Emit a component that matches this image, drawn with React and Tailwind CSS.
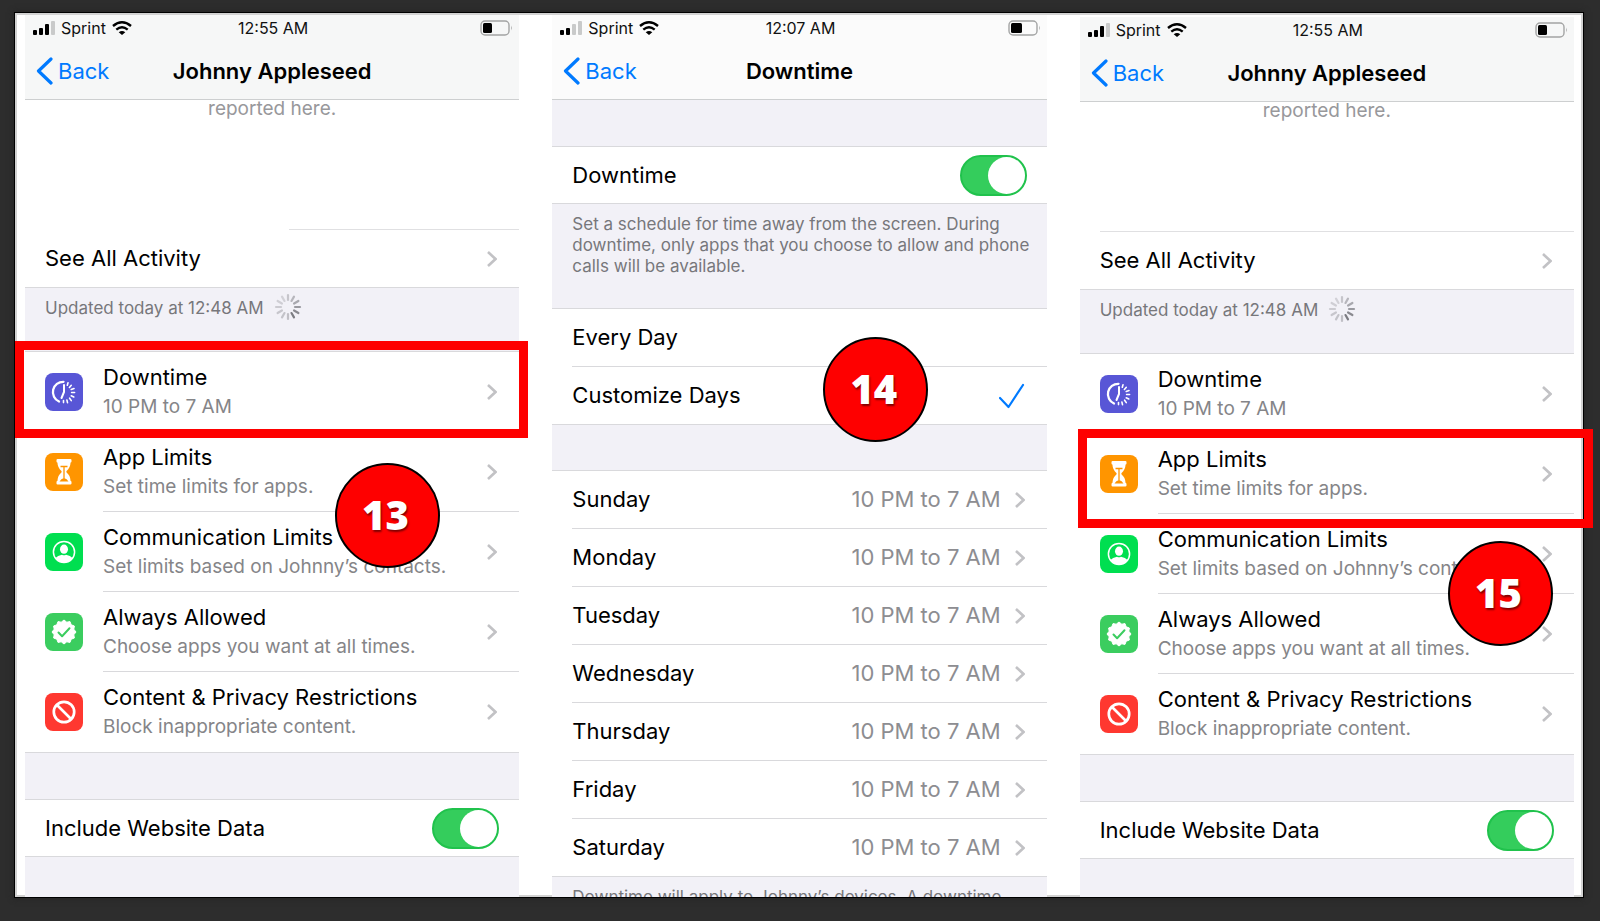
import React, { useState } from "react";
import clsx from "clsx";

const DAYS = [
  "Sunday",
  "Monday",
  "Tuesday",
  "Wednesday",
  "Thursday",
  "Friday",
  "Saturday",
];

function DowntimeIcon() {
  return (
    <svg viewBox="0 0 38 38" className="size-[38px] shrink-0 rounded-lg bg-[#5856d6]" fill="none" stroke="white" strokeLinecap="round">
      <path d="M18.5 8.800 A10.300 10.300 0 0 0 14 28.500" strokeWidth="2.300" />
      <path d="M19 12 V19 L16.500 25" strokeWidth="2" />
      <path d="M23 9.800 l-.7 2.400 M26.300 12.300 l-1.900 2.200 M29 15.500 l-2.800 1 M29.600 19.500 h-3 M28.800 24 l-2.600 -1.200 M26.300 27.600 l-1.700 -2.400 M22.500 29.600 l-.6 -2.600 M18.500 29.600 v-2" strokeWidth="1.600" />
    </svg>
  );
}

function HourglassIcon() {
  return (
    <svg viewBox="0 0 38 38" className="size-[38px] shrink-0 rounded-lg bg-[#ff9500]">
      <path
        d="M11.5 7 q0 -1 1.2 -1 h12.600 q1.200 0 1.200 1 v1.600 q0 .9 -.9 1 q-.3 5.400 -4 8.400 q-.6 .8 0 1.600 q3.700 3 4 8.400 q.9 .1 .9 1 v1.600 q0 1 -1.200 1 h-12.600 q-1.200 0 -1.200 -1 v-1.600 q0 -.9 .9 -1 q.3 -5.400 4 -8.400 q.6 -.8 0 -1.600 q-3.700 -3 -4 -8.400 q-.9 -.1 -.9 -1 z"
        fill="white"
      />
      <path d="M15.500 13.500 h7 M19 13.500 v12" stroke="#ff9500" strokeWidth="1.300" fill="none" />
      <path d="M14.500 28.500 q1.500 -2.800 4.500 -3.500 q3 .7 4.500 3.500 z" fill="#ff9500" />
    </svg>
  );
}

function ContactIcon() {
  return (
    <svg viewBox="0 0 38 38" className="size-[38px] shrink-0 rounded-lg bg-[#00df50]">
      <circle cx="19" cy="19" r="10.600" fill="none" stroke="white" strokeWidth="1.500" />
      <ellipse cx="19" cy="16.200" rx="4" ry="4.600" fill="white" />
      <path d="M10.500 25 q2 -2.500 6.500 -3.200 q2 1 4 0 q4.500 .7 6.500 3.200 q-3.200 4.500 -8.500 4.500 t-8.500 -4.500 z" fill="white" />
    </svg>
  );
}

function AllowedIcon() {
  return (
    <svg viewBox="0 0 38 38" className="size-[38px] shrink-0 rounded-lg bg-[#3bcd5f]">
      <path
        d="M19 7 L21.800 9.200 L25 8.600 L26.200 11.800 L29.400 13 L28.800 16.200 L31 19 L28.800 21.800 L29.400 25 L26.200 26.200 L25 29.400 L21.800 28.800 L19 31 L16.200 28.800 L13 29.400 L11.800 26.200 L8.600 25 L9.200 21.800 L7 19 L9.200 16.200 L8.600 13 L11.800 11.800 L13 8.600 L16.200 9.200 Z"
        fill="white"
        stroke="white"
        strokeWidth="1"
        strokeLinejoin="round"
      />
      <path d="M13.500 19.500 l3.600 3.700 l7.400 -8" fill="none" stroke="#3bcd5f" strokeWidth="2" strokeLinecap="round" strokeLinejoin="round" />
    </svg>
  );
}

function RestrictedIcon() {
  return (
    <svg viewBox="0 0 38 38" className="size-[38px] shrink-0 rounded-lg bg-[#ff3830]" fill="none" stroke="white" strokeWidth="2.700">
      <circle cx="19" cy="19" r="10.200" />
      <path d="M12 12 L26 26" />
    </svg>
  );
}

function Chevron() {
  return (
    <svg viewBox="0 0 10 16" className="h-4 w-[10px] shrink-0" fill="none" stroke="#c2c2c5" strokeWidth="2.600">
      <path d="M1 1 L8.500 8 L1 15" />
    </svg>
  );
}

function Spinner() {
  const spokes = Array.from({ length: 12 }, (_, i) => i);
  return (
    <svg viewBox="0 0 28 28" className="size-7" stroke="#76767c" strokeWidth="2.200" strokeLinecap="round">
      {spokes.map((i) => (
        <line key={i} x1="14" y1="2" x2="14" y2="7" transform={`rotate(${i * 30} 14 14)`} opacity={i < 6 ? 0.35 + i * 0.12 : 0.4 - (i - 6) * 0.03} />
      ))}
    </svg>
  );
}

function StatusBar({ time, bars, level }) {
  return (
    <div className="grid h-7 grid-cols-3 items-center pb-[2px] pl-2 pr-[6px] text-base text-[#111]">
      <div className="flex items-center gap-[6px]">
        <svg viewBox="0 0 22 14" className="h-[14px] w-[22px]">
          {[5, 7, 11, 14].map((h, i) => (
            <rect key={h} x={i * 6} y={14 - h} width="4" height={h} rx="1" fill={i < bars ? "#000" : "#c9caca"} />
          ))}
        </svg>
        <span>Sprint</span>
        <svg viewBox="0 0 20 14" className="h-[14px] w-5" fill="none" stroke="black" strokeWidth="2.400">
          <path d="M1 5 Q10 -2.500 19 5" />
          <path d="M4.300 8.600 Q10 4 15.700 8.600" />
          <path d="M10 14 L6.700 11.200 Q10 8.700 13.300 11.200 Z" fill="black" stroke="none" />
        </svg>
      </div>
      <span className="text-center">{time}</span>
      <svg viewBox="0 0 33 16" className="h-4 w-[33px] justify-self-end">
        <rect x="1" y="1" width="28" height="14" rx="4" fill="none" stroke="#a3a4a4" strokeWidth="1.400" />
        <rect x="3" y="3" width={level} height="10" rx="1.500" fill="black" />
        <path d="M31 5.500 q1.600 2.500 0 5 z" fill="#a3a4a4" />
      </svg>
    </div>
  );
}

function NavBar({ title, time, bars, level, tinted }) {
  return (
    <header className={clsx("border-b border-[#cdcfd0]", tinted ? "bg-[#f6f7f7]" : "bg-[#fbfbfb]")}>
      <StatusBar time={time} bars={bars} level={level} />
      <div className="grid h-14 grid-cols-[1fr_auto_1fr] items-center">
        <a href="#back" className="flex items-center gap-[5px] pl-[11px] text-[22px] text-[#007aff]">
          <svg viewBox="0 0 17 28" className="h-7 w-[17px]" fill="none" stroke="#007aff" strokeWidth="3.200" strokeLinecap="round" strokeLinejoin="round">
            <path d="M15 2 L2.500 14 L15 26" />
          </svg>
          Back
        </a>
        <h1 className="text-[22px] font-semibold text-black">{title}</h1>
      </div>
    </header>
  );
}

function ToggleRow({ id, label }) {
  const [on, setOn] = useState(true);
  return (
    <div className="flex h-[57px] items-center justify-between border-b border-[#d9d9dc] px-5">
      <label htmlFor={id} className="text-[22px] text-black">
        {label}
      </label>
      <input
        id={id}
        type="checkbox"
        role="switch"
        checked={on}
        onChange={(e) => setOn(e.target.checked)}
        className="h-[41px] w-[67px] appearance-none rounded-full border-2 border-[#c9c9cc] bg-[#d9d9dc] before:block before:size-[37px] before:rounded-full before:bg-white checked:border-[#20c24c] checked:bg-[#34cd5c] checked:before:ml-[26px]"
      />
    </div>
  );
}

function StepBadge({ number, className }) {
  return (
    <div
      className={clsx(
        "absolute z-20 flex size-[105px] items-center justify-center rounded-full border-2 border-black bg-[#fe0000] pb-[2px] pr-1 font-['Open_Sans',sans-serif] text-[40px] font-extrabold text-white [text-shadow:1px_2px_2px_rgba(0,0,0,0.5)]",
        className
      )}
    >
      {number}
    </div>
  );
}

const SETTINGS = [
  { id: "downtime", icon: DowntimeIcon, title: "Downtime", detail: "10 PM to 7 AM" },
  { id: "limits", icon: HourglassIcon, title: "App Limits", detail: "Set time limits for apps." },
  { id: "communication", icon: ContactIcon, title: "Communication Limits", detail: "Set limits based on Johnny’s contacts." },
  { id: "allowed", icon: AllowedIcon, title: "Always Allowed", detail: "Choose apps you want at all times." },
  { id: "privacy", icon: RestrictedIcon, title: "Content & Privacy Restrictions", detail: "Block inappropriate content." },
];

function SettingRow({ item, last, highlight }) {
  const Icon = item.icon;
  return (
    <li className="relative">
      <a href={`#${item.id}`} className="flex h-20 items-center gap-5 pl-5">
        <Icon />
        <span className={clsx("flex h-full min-w-0 flex-1 items-center justify-between pr-[22px]", !last && "border-b border-[#d9d9dc]")}>
          <span className="flex flex-col whitespace-nowrap leading-[30px]">
            <span className="text-[22px] text-black">{item.title}</span>
            <span className="text-[19px] text-[#858588]">{item.detail}</span>
          </span>
          <Chevron />
        </span>
      </a>
      {highlight && (
        <div className={clsx("pointer-events-none absolute z-10 border-[9px] border-[#fe0000]", highlight)} />
      )}
    </li>
  );
}

function ScreenTime({ id, highlighted, highlight, dividerClass, className }) {
  return (
    <section className={clsx("relative flex flex-col", className)}>
      <NavBar title="Johnny Appleseed" time="12:55 AM" bars={3} level={9} tinted />
      <div className="flex h-[129px] justify-center overflow-hidden">
        <p className="text-[19px] leading-[18px] text-[#98989b]">reported here.</p>
      </div>
      <div className={clsx("border-t border-[#e0e0e2]", dividerClass)} />
      <a href="#activity" className="flex h-[58px] items-center justify-between border-b border-[#d9d9dc] pl-5 pr-[22px] text-[22px] text-black">
        See All Activity
        <Chevron />
      </a>
      <div className="flex h-16 items-start gap-[10px] border-b border-[#d9d9dc] bg-[#f2f1f7] pl-5 pt-[5px] text-[17px] leading-[31px] text-[#77777b]">
        <span>Updated today at 12:48 AM</span>
        <Spinner />
      </div>
      <ul>
        {SETTINGS.map((item, i) => (
          <SettingRow
            key={item.id}
            item={item}
            last={i === SETTINGS.length - 1}
            highlight={item.id === highlighted ? highlight : null}
          />
        ))}
      </ul>
      <div className="h-12 border-y border-[#d9d9dc] bg-[#f2f1f7]" />
      <ToggleRow id={id} label="Include Website Data" />
      <div className="flex-1 bg-[#f2f1f7]" />
    </section>
  );
}

function Downtime() {
  const [schedule, setSchedule] = useState("Customize Days");
  return (
    <section className="relative flex flex-col">
      <NavBar title="Downtime" time="12:07 AM" bars={2} level={11} />
      <div className="h-[47px] border-b border-[#d9d9dc] bg-[#f2f1f7]" />
      <ToggleRow id="downtime-on" label="Downtime" />
      <div className="h-[105px] border-b border-[#d9d9dc] bg-[#f2f1f7] pl-5 pr-3 pt-[10px]">
        <p className="text-[17px] leading-[21px] text-[#77777b]">
          Set a schedule for time away from the screen. During downtime, only
          apps that you choose to allow and phone calls will be available.
        </p>
      </div>
      <div className="border-b border-[#d9d9dc] pl-5">
        {["Every Day", "Customize Days"].map((option, i) => (
          <label key={option} className={clsx("flex items-center justify-between pr-[22px] text-[22px] text-black", i === 0 ? "h-[58px] border-b border-[#d9d9dc]" : "h-[57px]")}>
            {option}
            <input type="radio" name="schedule" checked={schedule === option} onChange={() => setSchedule(option)} className="size-0 appearance-none" />
            {schedule === option && (
              <svg viewBox="0 0 26 26" className="ml-auto size-[26px]" fill="none" stroke="#007aff" strokeWidth="2.200" strokeLinecap="round" strokeLinejoin="round">
                <path d="M1 15 L9.500 24 L24 2" />
              </svg>
            )}
          </label>
        ))}
      </div>
      <div className="h-[46px] border-b border-[#d9d9dc] bg-[#f2f1f7]" />
      <ul className="border-b border-[#d9d9dc] pl-5">
        {DAYS.map((day, i) => (
          <li key={day}>
            <a href={`#${day}`} className={clsx("flex items-center pr-[22px] text-[22px] text-black", i < DAYS.length - 1 ? "h-[58px] border-b border-[#d9d9dc]" : "h-[57px]")}>
              {day}
              <span className="ml-auto mr-[14px] text-[#8d8d91]">10 PM to 7 AM</span>
              <Chevron />
            </a>
          </li>
        ))}
      </ul>
      <div className="h-5 overflow-hidden bg-[#f2f1f7] pl-5 pr-3 pt-[10px]">
        <p className="text-[17px] leading-[21px] text-[#77777b]">
          Downtime will apply to Johnny’s devices. A downtime
        </p>
      </div>
      <StepBadge number="14" className="left-[271px] top-[322px]" />
    </section>
  );
}

function App() {
  return (
    <div className="min-h-screen bg-[#2d2d2d] pb-6 pl-[14px] pr-4 pt-3 font-[Inter,sans-serif]">
      <main className="grid grid-cols-3 gap-x-[33px] border border-black bg-white pl-[10px] pr-[9px] pt-[2px] shadow-[inset_0_0_0_2px_#d2d2d2,0_0_6px_#222]">
        <div className="relative grid">
          <ScreenTime
            id="website-data-1"
            highlighted="downtime"
            highlight="-left-[10px] -right-[9px] -top-[11px] -bottom-[6px]"
            dividerClass="ml-[264px]"
          />
          <StepBadge number="13" className="left-[310px] top-[448px]" />
        </div>
        <Downtime />
        <div className="relative grid">
          <ScreenTime
            id="website-data-2"
            highlighted="limits"
            highlight="-left-[2px] -right-[19px] -top-[5px] -bottom-[14px]"
            dividerClass="ml-5"
            className="mt-[2px]"
          />
          <StepBadge number="15" className="right-[21px] top-[526px]" />
        </div>
      </main>
    </div>
  );
}

export default App;
